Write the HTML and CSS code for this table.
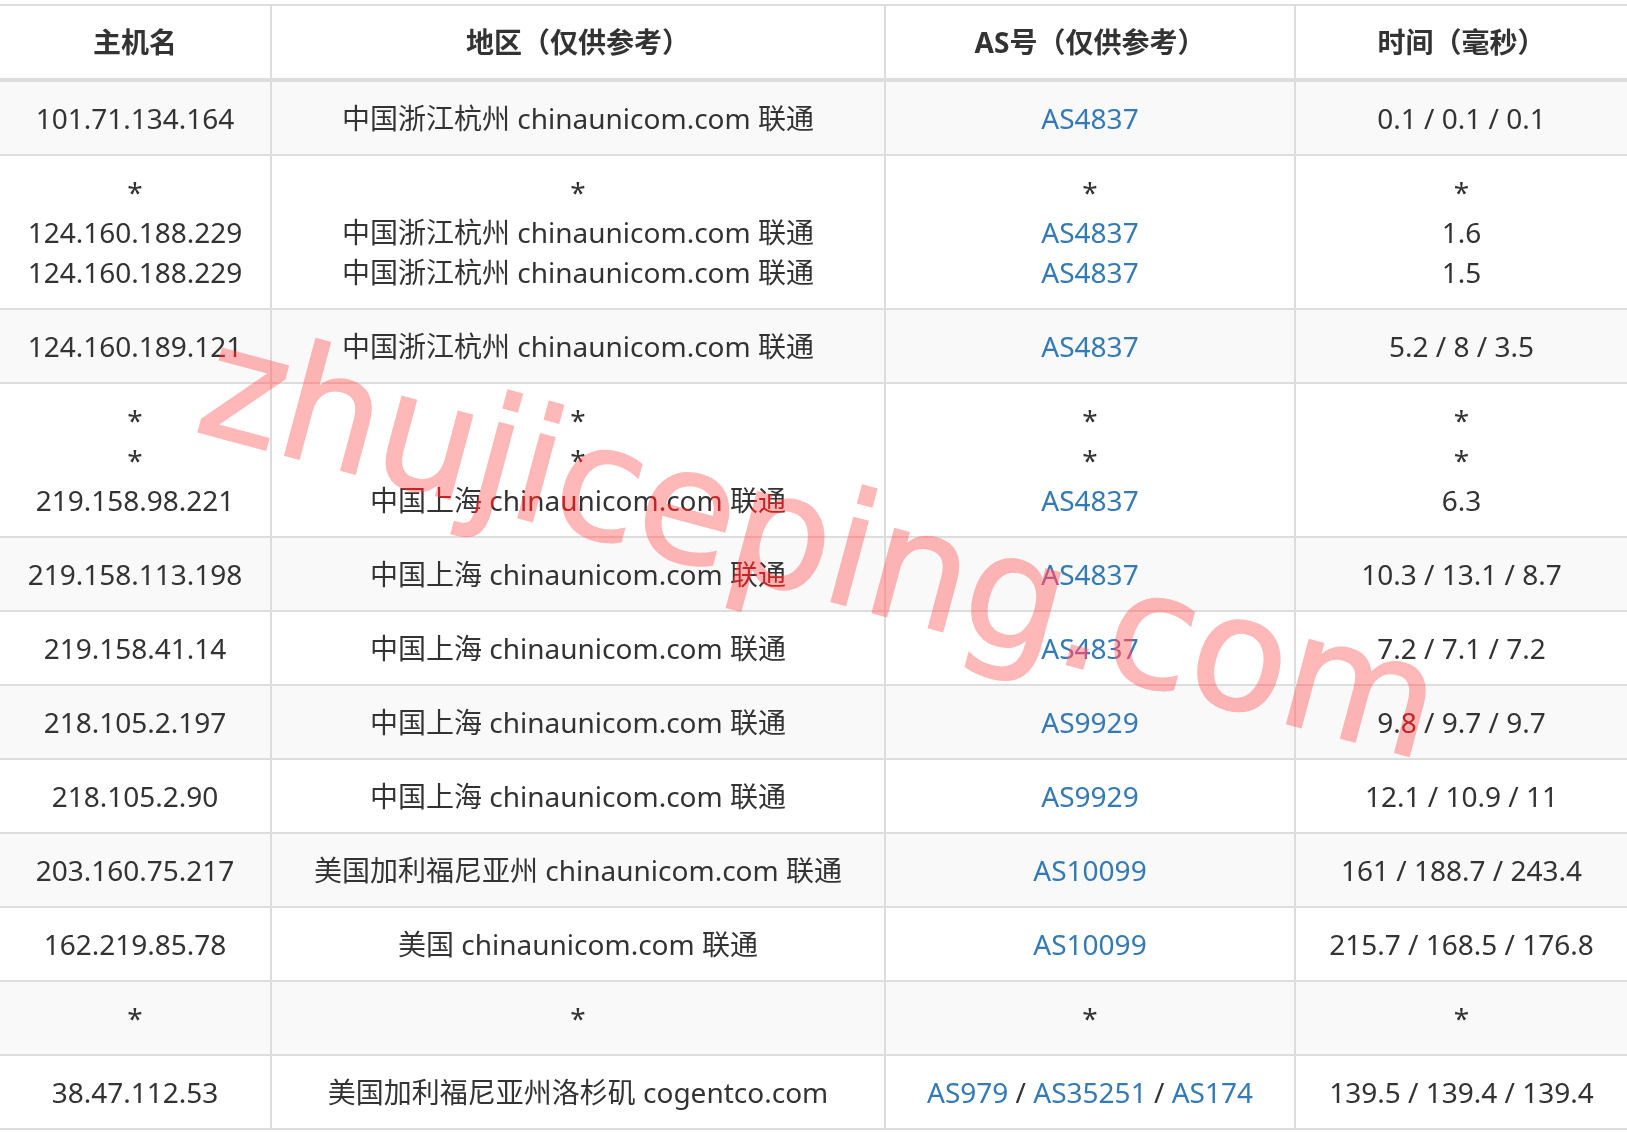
FILE: index.html
```html
<!DOCTYPE html>
<html lang="zh-CN">
<head>
<meta charset="utf-8">
<title>路由追踪</title>
<link rel="stylesheet" href="styles.css">
</head>
<body>
<div class="page">
<table class="trace">
  <thead>
    <tr>
      <th class="c-host">主机名</th>
      <th class="c-region">地区（仅供参考）</th>
      <th class="c-as">AS号（仅供参考）</th>
      <th class="c-time">时间（毫秒）</th>
    </tr>
  </thead>
  <tbody>
    <tr>
      <td>101.71.134.164</td>
      <td>中国浙江杭州 chinaunicom.com 联通</td>
      <td><a href="#">AS4837</a></td>
      <td>0.1 / 0.1 / 0.1</td>
    </tr>
    <tr>
      <td>*<br>124.160.188.229<br>124.160.188.229</td>
      <td>*<br>中国浙江杭州 chinaunicom.com 联通<br>中国浙江杭州 chinaunicom.com 联通</td>
      <td>*<br><a href="#">AS4837</a><br><a href="#">AS4837</a></td>
      <td>*<br>1.6<br>1.5</td>
    </tr>
    <tr>
      <td>124.160.189.121</td>
      <td>中国浙江杭州 chinaunicom.com 联通</td>
      <td><a href="#">AS4837</a></td>
      <td>5.2 / 8 / 3.5</td>
    </tr>
    <tr>
      <td>*<br>*<br>219.158.98.221</td>
      <td>*<br>*<br>中国上海 chinaunicom.com 联通</td>
      <td>*<br>*<br><a href="#">AS4837</a></td>
      <td>*<br>*<br>6.3</td>
    </tr>
    <tr>
      <td>219.158.113.198</td>
      <td>中国上海 chinaunicom.com 联通</td>
      <td><a href="#">AS4837</a></td>
      <td>10.3 / 13.1 / 8.7</td>
    </tr>
    <tr>
      <td>219.158.41.14</td>
      <td>中国上海 chinaunicom.com 联通</td>
      <td><a href="#">AS4837</a></td>
      <td>7.2 / 7.1 / 7.2</td>
    </tr>
    <tr>
      <td>218.105.2.197</td>
      <td>中国上海 chinaunicom.com 联通</td>
      <td><a href="#">AS9929</a></td>
      <td>9.8 / 9.7 / 9.7</td>
    </tr>
    <tr>
      <td>218.105.2.90</td>
      <td>中国上海 chinaunicom.com 联通</td>
      <td><a href="#">AS9929</a></td>
      <td>12.1 / 10.9 / 11</td>
    </tr>
    <tr>
      <td>203.160.75.217</td>
      <td>美国加利福尼亚州 chinaunicom.com 联通</td>
      <td><a href="#">AS10099</a></td>
      <td>161 / 188.7 / 243.4</td>
    </tr>
    <tr>
      <td>162.219.85.78</td>
      <td>美国 chinaunicom.com 联通</td>
      <td><a href="#">AS10099</a></td>
      <td>215.7 / 168.5 / 176.8</td>
    </tr>
    <tr>
      <td>*</td>
      <td>*</td>
      <td>*</td>
      <td>*</td>
    </tr>
    <tr>
      <td>38.47.112.53</td>
      <td>美国加利福尼亚州洛杉矶 cogentco.com</td>
      <td><a href="#">AS979</a> / <a href="#">AS35251</a> / <a href="#">AS174</a></td>
      <td>139.5 / 139.4 / 139.4</td>
    </tr>
  </tbody>
</table>
<div class="wm wm-tint" aria-hidden="true">zhujiceping.com</div>
<div class="wm wm-glow" aria-hidden="true">zhujiceping.com</div>
</div>
</body>
</html>
```

FILE: styles.css
```css
html, body {
  margin: 0;
  padding: 0;
  background: #ffffff;
}

.page {
  position: relative;
  width: 1627px;
  height: 1132px;
  overflow: hidden;
  padding-top: 4px;
  box-sizing: border-box;
  font-family: "Noto Sans", "Noto Sans CJK SC", sans-serif;
  color: #333333;
}

.trace {
  width: 1627px;
  table-layout: fixed;
  border-collapse: separate;
  border-spacing: 0;
  font-size: 28px;
  line-height: 40px;
}

.trace th,
.trace td {
  box-sizing: border-box;
  padding: 16px;
  text-align: center;
  vertical-align: middle;
  white-space: nowrap;
}

.trace th + th,
.trace td + td {
  border-left: 2px solid #dddddd;
}

.trace th {
  font-weight: 700;
  border-top: 2px solid #dddddd;
  border-bottom: 4px solid #dddddd;
  background: #ffffff;
}

.trace td {
  border-bottom: 2px solid #dddddd;
}

.trace tbody tr:nth-child(odd) td {
  background: #f9f9f9;
}

.trace tbody tr:nth-child(even) td {
  background: #ffffff;
}

.c-host { width: 270px; }
.c-region { width: 614px; }
.c-as { width: 410px; }
.c-time { width: 333px; }

.trace a {
  color: #337ab7;
  text-decoration: none;
}

/* watermark overlay */
.wm {
  position: absolute;
  left: 192px;
  top: 296px;
  font-family: "DejaVu Sans", sans-serif;
  font-size: 158px;
  line-height: 158px;
  letter-spacing: -1px;
  white-space: nowrap;
  transform-origin: 0 134px;
  transform: rotate(15deg);
  pointer-events: none;
}

.wm-tint {
  color: #fbb8b8;
  -webkit-text-stroke: 2px #fbb8b8;
  mix-blend-mode: multiply;
}

.wm-glow {
  color: #b40000;
  -webkit-text-stroke: 2px #b40000;
  mix-blend-mode: screen;
}
```
